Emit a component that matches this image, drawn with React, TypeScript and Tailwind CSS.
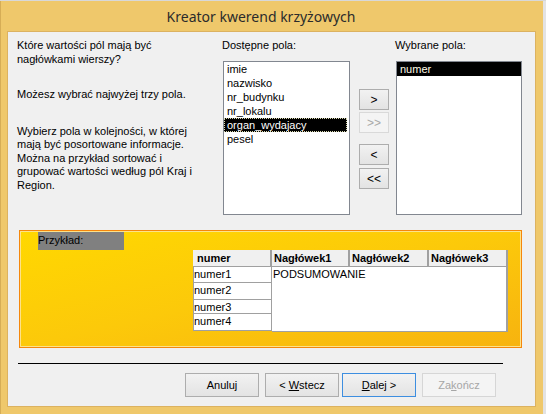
import React from 'react';

const leftFields = ['imie', 'nazwisko', 'nr_budynku', 'nr_lokalu', 'organ_wydajacy', 'pesel'];
const rowCells = [
    { label: 'numer1', h: 'h-[16px]' },
    { label: 'numer2', h: 'h-[17px]' },
    { label: 'numer3', h: 'h-[14px]' },
    { label: 'numer4', h: 'h-[17px]' },
];

function ArrowButton({ label, disabled, className }: { label: string; disabled?: boolean; className?: string }) {
    return (
        <div
            className={
                'flex h-[21px] w-[30px] items-center justify-center border text-[12px] leading-none ' +
                (disabled
                    ? 'border-[#d9d9d9] bg-[#f4f4f4] text-[#a8a8a8]'
                    : 'border-[#adadad] bg-gradient-to-b from-[#f2f2f2] to-[#e3e3e3] text-black') +
                ' ' +
                (className ?? '')
            }
        >
            {label}
        </div>
    );
}

function DialogButton({ children, variant, className }: { children: React.ReactNode; variant?: 'default' | 'focus' | 'disabled'; className?: string }) {
    const look =
        variant === 'focus'
            ? 'border-[#3d8ee0] bg-gradient-to-b from-[#f2f2f2] to-[#e3e3e3] text-black'
            : variant === 'disabled'
            ? 'border-[#d6d6d6] bg-[#f4f4f4] text-[#a6a6a6]'
            : 'border-[#adadad] bg-gradient-to-b from-[#f2f2f2] to-[#e3e3e3] text-black';
    return (
        <div className={'flex h-[24px] w-[74px] items-center justify-center border text-[11px] ' + look + ' ' + (className ?? '')}>
            {children}
        </div>
    );
}

export default function App() {
    return (
        <div className="flex h-[414px] w-[546px] flex-col overflow-hidden bg-[#e9e9e9] font-['Liberation_Sans',Arial,sans-serif] text-[11px] text-black">
            <div className="h-px w-full bg-[#d8d8d8]" />
            <div className="flex flex-1">
                {/* window frame */}
                <div className="flex w-[543px] flex-col border-l border-[#d6ad56] bg-[#efc86b]">
                    <div className="flex h-[30px] items-center justify-center pr-[22px] font-['Noto_Sans',sans-serif] text-[14px] text-[#2b2b2b]">
                        Kreator kwerend krzyżowych
                    </div>

                    {/* client area */}
                    <div className="ml-[6px] mr-[7px] flex h-[376px] flex-col border border-[#dcb260] bg-[#f0f0f0]">
                        {/* top section */}
                        <div className="flex pt-[6px]">
                            <div className="w-[214px] pl-[9px] leading-[13.5px]">
                                <p className="pt-px">Które wartości pól mają być<br />nagłówkami wierszy?</p>
                                <p className="mt-[22px]">Możesz wybrać najwyżej trzy pola.</p>
                                <p className="mt-[23px] w-[190px]">
                                    Wybierz pola w kolejności, w której mają być posortowane informacje. Można na przykład sortować i
                                    grupować wartości według pól Kraj i Region.
                                </p>
                            </div>

                            <div className="flex w-[128px] flex-col">
                                <div className="h-[14px] leading-[14px]">Dostępne pola:</div>
                                <div className="ml-px mt-[9px] h-[154px] w-[127px] border border-[#828790] bg-white pr-[2px]">
                                    {leftFields.map((f) =>
                                        f === 'organ_wydajacy' ? (
                                            <div key={f} className="h-[14px] border border-dotted border-[#d8d8b0] bg-black pl-[2px] leading-[12px] text-white">
                                                {f}
                                            </div>
                                        ) : (
                                            <div key={f} className="h-[14px] pl-[3px] leading-[14px]">
                                                {f}
                                            </div>
                                        )
                                    )}
                                </div>
                            </div>

                            <div className="ml-[9px] mt-[51px] flex flex-col">
                                <ArrowButton label=">" />
                                <ArrowButton label=">>" disabled className="mt-[2px]" />
                                <ArrowButton label="<" className="mt-[11px]" />
                                <ArrowButton label="<<" className="mt-[3px]" />
                            </div>

                            <div className="ml-[6px] flex flex-col">
                                <div className="h-[14px] leading-[14px]">Wybrane pola:</div>
                                <div className="ml-px mt-[9px] h-[154px] w-[126px] border border-[#828790] bg-white">
                                    <div className="h-[14px] bg-black pl-[3px] leading-[14px] text-[#fffbe6]">numer</div>
                                </div>
                            </div>
                        </div>

                        {/* example panel */}
                        <div className="ml-[11px] mt-[15px] h-[118px] w-[503px] border border-[#f5870b] bg-gradient-to-br from-[#ffd800] via-[#fcc90a] to-[#f7b30f] shadow-[inset_0_0_0_1px_#fde28a]">
                            <div className="ml-[18px] mt-px h-[18px] w-[86px] bg-[#808080] leading-[16px] text-black">Przykład:</div>
                            <div className="ml-[173px] flex w-[315px]">
                                <div className="flex w-[79px] flex-col">
                                    <div className="h-[17px] border-b border-r-2 border-[#a0a0a0] border-b-[#a0a0a0] bg-[#f0f0f0] pl-[4px] font-bold leading-[16px]">
                                        numer
                                    </div>
                                    {rowCells.map((r) => (
                                        <div key={r.label} className={r.h + ' border-b border-l border-r border-[#a0a0a0] bg-white leading-[15px]'}>
                                            {r.label}
                                        </div>
                                    ))}
                                </div>
                                <div className="flex flex-1 flex-col">
                                    <div className="flex h-[17px] border-b border-[#a0a0a0]">
                                        <div className="w-[78px] border-r-2 border-[#a0a0a0] bg-[#f0f0f0] pl-[2px] font-bold leading-[16px]">Nagłówek1</div>
                                        <div className="w-[79px] border-r-2 border-[#a0a0a0] bg-[#f0f0f0] pl-[2px] font-bold leading-[16px]">Nagłówek2</div>
                                        <div className="w-[79px] border-r-2 border-[#a0a0a0] bg-[#f0f0f0] pl-[2px] font-bold leading-[16px]">Nagłówek3</div>
                                    </div>
                                    <div className="h-[65px] border-b border-r-2 border-[#a0a0a0] bg-white pl-px leading-[14px]">PODSUMOWANIE</div>
                                </div>
                            </div>
                        </div>

                        <div className="ml-[10px] mt-[15px] h-px w-[485px] bg-black" />

                        <div className="ml-[177px] mt-[9px] flex">
                            <DialogButton>Anuluj</DialogButton>
                            <DialogButton className="ml-[6px]">
                                &lt;&nbsp;<span className="underline">W</span>stecz
                            </DialogButton>
                            <DialogButton variant="focus" className="ml-[3px]">
                                <span className="underline">D</span>alej &gt;
                            </DialogButton>
                            <DialogButton variant="disabled" className="ml-[6px]">
                                Za<span className="underline">k</span>ończ
                            </DialogButton>
                        </div>
                    </div>
                </div>
                <div className="flex-1 bg-[#e3e3e3]" />
            </div>
        </div>
    );
}
